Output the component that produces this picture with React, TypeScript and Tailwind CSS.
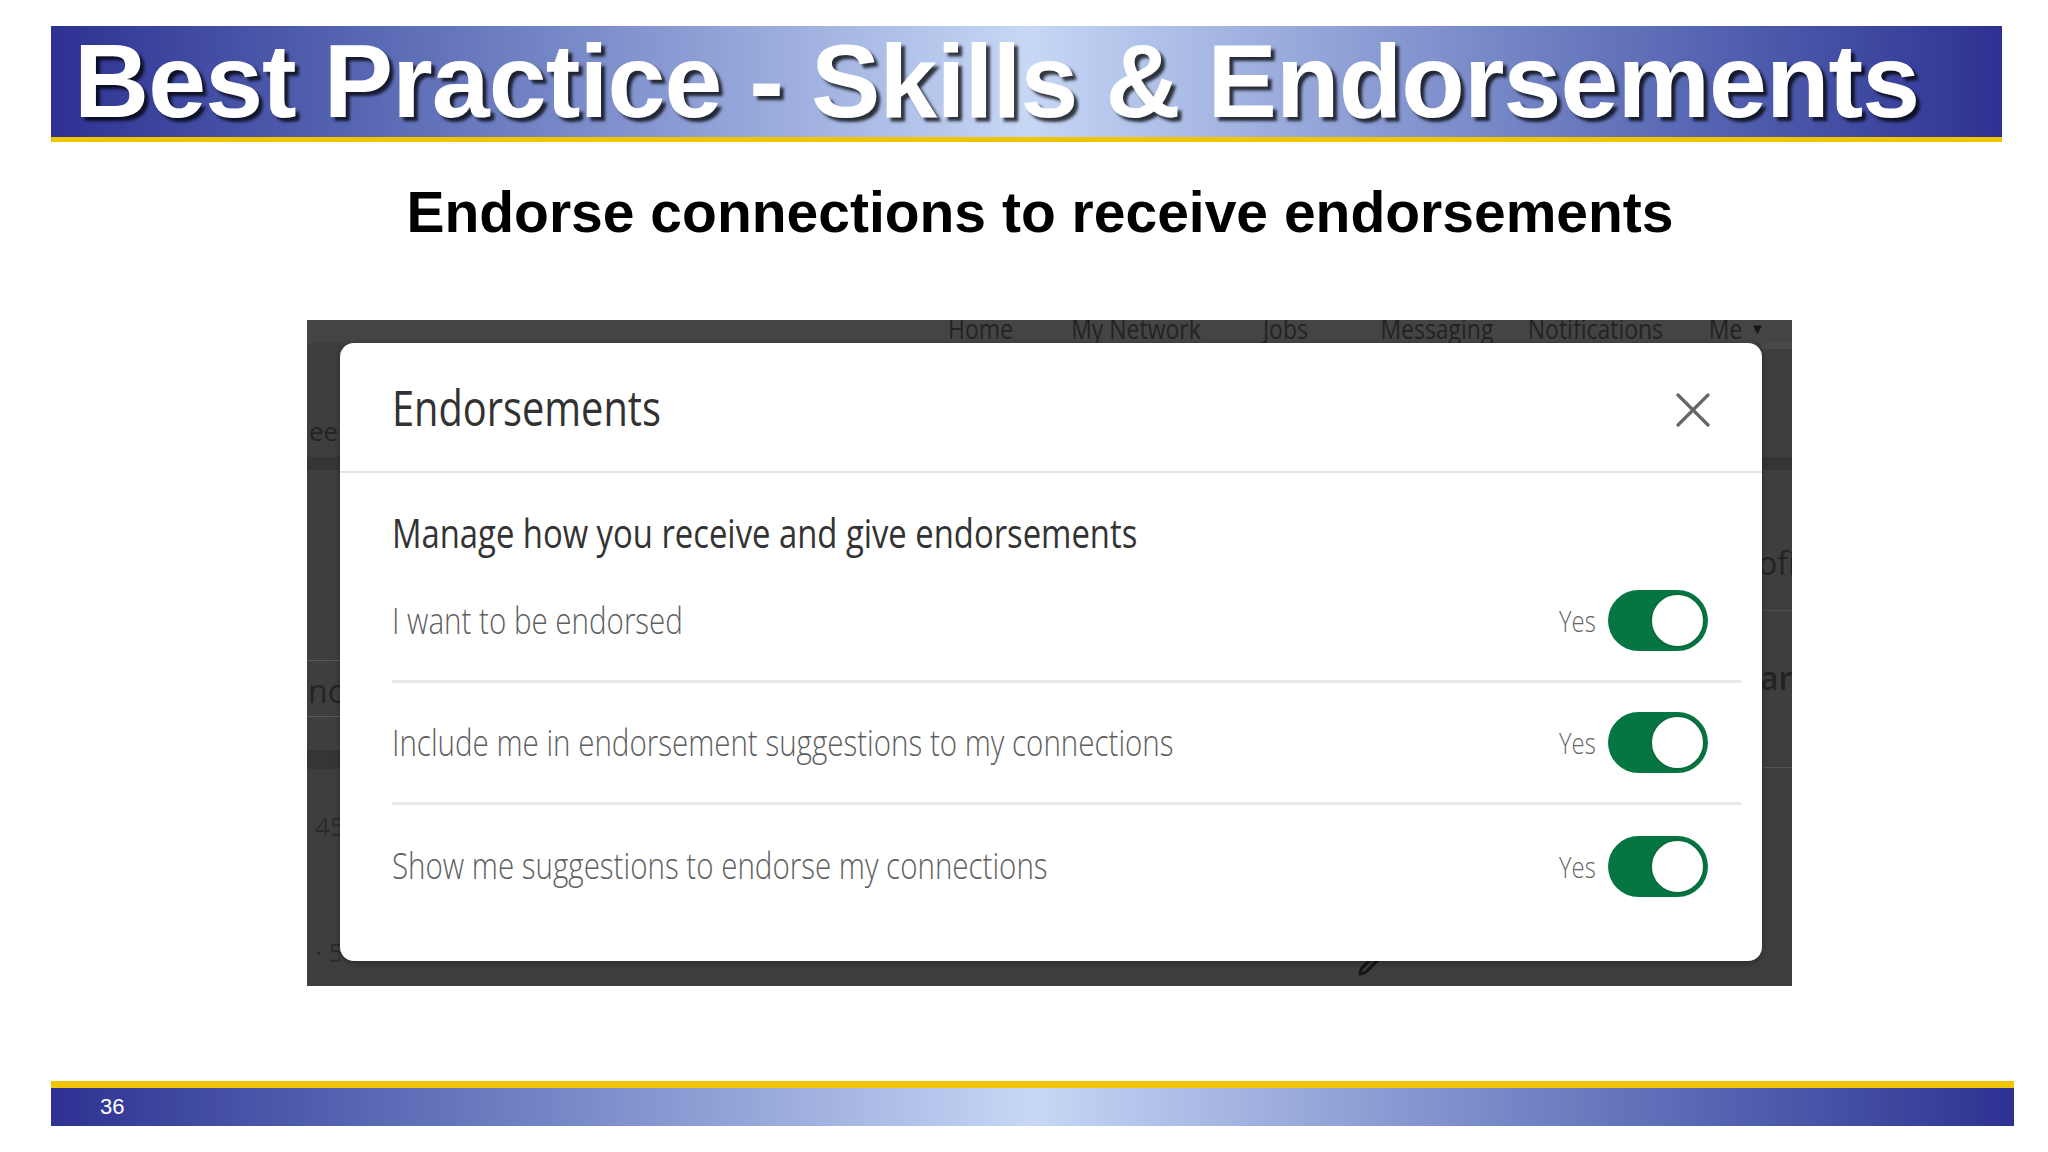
import { Pencil } from "lucide-react"

const seg = "font-['Open_Sans','Noto_Sans',sans-serif]"

function Squish({ children, className = "" }: { children: React.ReactNode; className?: string }) {
  return <span className={`inline-block origin-left scale-x-[0.82] whitespace-nowrap ${className}`}>{children}</span>
}

function Toggle() {
  return (
    <div className="relative w-[100px] h-[61px] rounded-full bg-[#057642]">
      <div className="absolute right-[3px] top-[3px] w-[55px] h-[55px] rounded-full bg-white border-2 border-[#0a6b3d]" />
    </div>
  )
}

function SettingRow({ label, last }: { label: string; last?: boolean }) {
  return (
    <div className={`h-[122px] flex items-center justify-between pr-[33px] ${last ? "" : "border-b-[3px] border-[#e9e9e9]"}`}>
      <Squish className="text-[36px] leading-none font-light text-[#5e5e5e]">{label}</Squish>
      <div className="flex items-center gap-[12px]">
        <span className="inline-block scale-x-[0.82] origin-right text-[29px] leading-none font-light text-[#666666]">Yes</span>
        <Toggle />
      </div>
    </div>
  )
}

const navItems = ["Home", "My Network", "Jobs", "Messaging", "Notifications"]

function BackgroundPage() {
  return (
    <div className={`w-full h-full flex flex-col bg-[#3e3e3e] text-[#232323] ${seg}`}>
      {/* top nav, cut off by the crop */}
      <div className="h-[23px] flex items-end pl-[598px] overflow-hidden bg-[#444444]">
        {navItems.map((n) => (
          <div key={n} className="w-[152px] text-center text-[28px] leading-[28px] mb-[1px]">
            <span className="inline-block scale-x-[0.82] whitespace-nowrap">{n}</span>
          </div>
        ))}
        <div className="ml-[40px] flex items-end text-[28px] leading-[28px] mb-[1px]">
          <span className="inline-block scale-x-[0.82]">Me</span>
          <span className="text-[15px] leading-[15px] ml-[4px] mb-[6px] text-[#151515]">▼</span>
        </div>
      </div>
      <div className="flex-1 flex">
        {/* left strip */}
        <div className="w-[33px] flex flex-col overflow-hidden">
          <div className="h-[75px]" />
          <div className="h-[26px] pl-[2px] text-[26px] leading-[26px] whitespace-nowrap">eer</div>
          <div className="h-[13px] mt-[13px] bg-[#353535]" />
          <div className="h-[190px]" />
          <div className="h-px bg-[#5a5a5a]" />
          <div className="h-[50px] mt-[5px] flex items-center pl-[1px] text-[32px] whitespace-nowrap">nce</div>
          <div className="h-px bg-[#5a5a5a]" />
          <div className="h-[33px]" />
          <div className="h-[19px] bg-[#353535]" />
          <div className="h-[44px]" />
          <div className="h-[26px] pl-[8px] text-[26px] leading-[26px] text-[#2b2b2b] whitespace-nowrap">45</div>
          <div className="h-[100px]" />
          <div className="h-[26px] pl-[8px] text-[26px] leading-[26px] text-[#2b2b2b] whitespace-nowrap">· 5</div>
        </div>
        {/* middle, covered by the dialog */}
        <div className="flex-1 flex flex-col justify-end">
          <Pencil className="ml-[1018px] mb-[10px] w-[24px] h-[24px] text-[#151515]" strokeWidth={3} />
        </div>
        {/* right strip */}
        <div className="w-[30px] flex flex-col overflow-hidden">
          <div className="h-[6px] bg-[#4a4a4a]" />
          <div className="h-[108px]" />
          <div className="h-[13px] bg-[#353535]" />
          <div className="h-[76px]" />
          <div className="h-[34px] -ml-[4px] text-[32px] leading-[34px] whitespace-nowrap">ofi</div>
          <div className="h-[30px]" />
          <div className="h-px bg-[#4f4f4f]" />
          <div className="h-[50px]" />
          <div className="h-[34px] -ml-[2px] text-[32px] leading-[34px] font-semibold whitespace-nowrap">ar</div>
          <div className="h-[72px]" />
          <div className="h-px bg-[#555555]" />
        </div>
      </div>
    </div>
  )
}

export default function App() {
  return (
    <div className="w-[2048px] h-[1152px] bg-white flex flex-col overflow-hidden font-['Liberation_Sans',Arial,sans-serif]">
      {/* Title banner */}
      <div className="mt-[26px] ml-[51px] w-[1951px]">
        <div className="h-[111px] bg-linear-to-r from-[#2e3192] via-[#c7d7f5] to-[#2e3192] pl-[23px] pt-[3px]">
          <h1 className="text-[104px] leading-none font-bold text-white tracking-[-0.9px] whitespace-nowrap [text-shadow:4px_4px_3px_rgba(0,0,0,0.75)]">
            Best Practice - Skills &amp; Endorsements
          </h1>
        </div>
        <div className="h-[5px] bg-[#f2c500]" />
      </div>

      <h2 className="mt-[42px] pl-[32px] text-center text-[57px] leading-none font-bold text-black whitespace-nowrap">
        Endorse connections to receive endorsements
      </h2>

      {/* Screenshot of the dialog */}
      <div className="relative mt-[79px] ml-[307px] w-[1485px] h-[666px] overflow-hidden">
        <BackgroundPage />
        <div className={`absolute left-[33px] top-[23px] w-[1422px] h-[618px] bg-white rounded-[14px] shadow-[0_2px_6px_rgba(0,0,0,0.3)] ${seg}`}>
          <div className="h-[130px] flex items-center justify-between pl-[52px] pr-[52px] border-b-2 border-[#e4e4e4]">
            <Squish className="text-[48.5px] leading-none text-[#323232]">Endorsements</Squish>
            <svg width="34" height="34" viewBox="0 0 34 34" className="mt-[6px]">
              <path d="M2 2 L32 32 M32 2 L2 32" stroke="#666666" strokeWidth="3.2" strokeLinecap="round" />
            </svg>
          </div>
          <div className="pl-[52px] pr-[21px] pt-[40px]">
            <div className="h-[40px] flex items-center">
              <Squish className="text-[40px] leading-none text-[#333333]">Manage how you receive and give endorsements</Squish>
            </div>
            <div className="mt-[8px]">
              <SettingRow label="I want to be endorsed" />
              <SettingRow label="Include me in endorsement suggestions to my connections" />
              <SettingRow label="Show me suggestions to endorse my connections" last />
            </div>
          </div>
        </div>
      </div>

      {/* Footer bar */}
      <div className="mt-[95px] ml-[51px] w-[1963px]">
        <div className="h-[7px] bg-[#f2c500]" />
        <div className="h-[38px] bg-linear-to-r from-[#2e3192] via-[#c7d7f5] to-[#2e3192] flex items-center pl-[49px]">
          <span className="text-[22px] leading-none text-white">36</span>
        </div>
      </div>
    </div>
  )
}
